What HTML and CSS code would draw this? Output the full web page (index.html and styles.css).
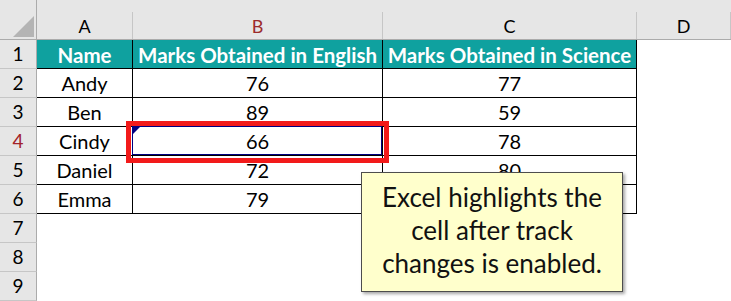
FILE: index.html
```html
<!DOCTYPE html>
<html>
<head>
<meta charset="utf-8">
<link rel="stylesheet" href="styles.css">
</head>
<body>
<div class="sheet">
  <div class="grid">
    <div class="corner"><span class="tri"></span></div>
    <div class="colhead"><span>A</span></div>
    <div class="colhead sel"><span>B</span></div>
    <div class="colhead"><span>C</span></div>
    <div class="colhead"><span>D</span></div>

    <div class="rowhead">1</div>
    <div class="cell th">Name</div>
    <div class="cell th">Marks Obtained in English</div>
    <div class="cell th">Marks Obtained in Science</div>
    <div class="blank"></div>

    <div class="rowhead">2</div>
    <div class="cell">Andy</div>
    <div class="cell">76</div>
    <div class="cell">77</div>
    <div class="blank"></div>

    <div class="rowhead">3</div>
    <div class="cell">Ben</div>
    <div class="cell">89</div>
    <div class="cell">59</div>
    <div class="blank"></div>

    <div class="rowhead sel">4</div>
    <div class="cell">Cindy</div>
    <div class="cell tracked">66</div>
    <div class="cell">78</div>
    <div class="blank"></div>

    <div class="rowhead">5</div>
    <div class="cell">Daniel</div>
    <div class="cell">72</div>
    <div class="cell">80</div>
    <div class="blank"></div>

    <div class="rowhead">6</div>
    <div class="cell">Emma</div>
    <div class="cell">79</div>
    <div class="cell"></div>
    <div class="blank"></div>

    <div class="rowhead">7</div>
    <div class="blank span4"></div>
    <div class="rowhead">8</div>
    <div class="blank span4"></div>
    <div class="rowhead">9</div>
    <div class="blank span4"></div>
  </div>

  <div class="redbox"></div>
  <div class="callout">Excel highlights the<br>cell after track<br>changes is enabled.</div>
</div>
</body>
</html>
```

FILE: styles.css
```css
* { box-sizing: border-box; }
html, body { margin: 0; padding: 0; background: #fff; }
body { width: 731px; height: 301px; overflow: hidden; font-family: "Lato", "Open Sans", sans-serif; color: #000; }

.sheet { position: relative; width: 731px; height: 301px; }

.grid {
  display: grid;
  grid-template-columns: 37px 96px 250px 254px 94px;
  grid-template-rows: 40px repeat(9, 29px);
}

.corner {
  background: #e6e6e6;
  border-right: 1px solid #ababab;
  border-bottom: 1px solid #ababab;
  position: relative;
}
.corner .tri {
  position: absolute;
  left: 13px;
  top: 16px;
  width: 0; height: 0;
  border-left: 21px solid transparent;
  border-bottom: 21px solid #b4b4b4;
}

.colhead {
  background: #e6e6e6;
  border-bottom: 1px solid #ababab;
  display: flex;
  align-items: flex-end;
}
.colhead span {
  display: block;
  width: 100%;
  height: 27px;
  padding-top: 2px;
  border-right: 1px solid #c6c6c6;
  text-align: center;
  font-size: 18px;
  line-height: 25px;
}
.colhead:last-child span { border-right: none; }
.colhead.sel span { color: #9c2b2b; }

.rowhead {
  background: #e6e6e6;
  border-right: 1px solid #ababab;
  border-bottom: 1px solid #c6c6c6;
  text-align: center;
  font-size: 19px;
  line-height: 28px;
}
.rowhead.sel { color: #a3232a; }

.cell {
  border-right: 1px solid #000;
  border-bottom: 1px solid #000;
  text-align: center;
  font-size: 20px;
  line-height: 28px;
  white-space: nowrap;
  position: relative;
}
.cell.th {
  background: #0fa19f;
  color: #fff;
  font-weight: 700;
  font-size: 20.5px;
  letter-spacing: 0;
  padding-top: 1px;
}
.cell.tracked::before {
  content: "";
  position: absolute;
  left: -1px; top: -1px; right: 0; bottom: 0;
  border: 1px solid #000080;
}
.cell.tracked::after {
  content: "";
  position: absolute;
  left: 0; top: 0;
  width: 0; height: 0;
  border-top: 7px solid #000080;
  border-right: 7px solid transparent;
}

.blank { background: #fff; }
.span4 { grid-column: span 4; }

.redbox {
  position: absolute;
  left: 126px;
  top: 121px;
  width: 263px;
  height: 42px;
  border: 5px solid #f21a1a;
}

.callout {
  position: absolute;
  left: 361px;
  top: 172px;
  width: 262px;
  height: 120px;
  padding-bottom: 4px;
  background: #ffffcc;
  border: 1px solid #4d4d4d;
  box-shadow: 2px 2px 3px rgba(0,0,0,0.35);
  display: flex;
  align-items: center;
  justify-content: center;
  text-align: center;
  font-size: 26px;
  line-height: 33px;
  color: #111;
}
```
